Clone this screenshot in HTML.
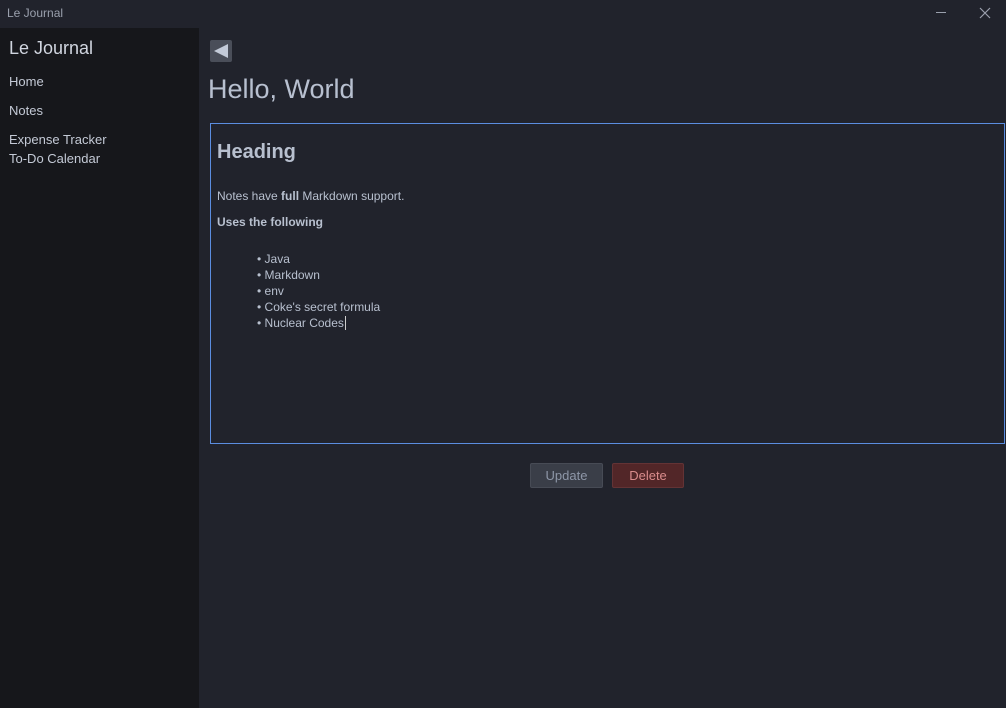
<!DOCTYPE html>
<html><head><style>
*{margin:0;padding:0;box-sizing:border-box}
body{width:1006px;height:708px;background:#21232c;font-family:"Liberation Sans",sans-serif;color:#b8c0cf;position:relative;overflow:hidden}
.tb{position:absolute;left:0;top:0;width:1006px;height:28px;background:#21232c}
.tb .t{position:absolute;left:7px;top:6px;font-size:12px;color:#9aa0ad}
.side{position:absolute;left:0;top:28px;width:199px;height:680px;background:#16171b}
.side div{position:absolute;left:9px;font-size:13px;color:#c4cad6}
.main div{position:absolute}
</style></head><body>
<div class="tb"><span class="t">Le Journal</span>
<div style="position:absolute;left:936px;top:12px;width:10px;height:1px;background:#9aa0ad"></div>
<svg style="position:absolute;left:979px;top:7px" width="12" height="12"><path d="M1 1L11 11M11 1L1 11" stroke="#9aa0ad" stroke-width="1.2"/></svg>
</div>
<div class="side">
<div style="top:10px;font-size:18px;color:#d0d5df">Le Journal</div>
<div style="top:46px">Home</div>
<div style="top:75px">Notes</div>
<div style="top:104px">Expense Tracker</div>
<div style="top:123px">To-Do Calendar</div>
</div>
<div class="main">
<div style="left:210px;top:40px;width:22px;height:22px;background:#4a4e59;border-radius:2px"></div>
<svg style="position:absolute;left:210px;top:40px" width="22" height="22"><path d="M4 11L18 4V18Z" fill="#c3cad8"/></svg>
<div style="left:208px;top:74px;font-size:27px;color:#b8c0d0">Hello, World</div>
<div style="left:210px;top:123px;width:795px;height:321px;border:1px solid #5b8de0"></div>
<div style="left:217px;top:141px;font-size:20px;font-weight:bold;color:#b8c0cf">Heading</div>
<div style="left:217px;top:189px;font-size:12px">Notes have <b>full</b> Markdown support.</div>
<div style="left:217px;top:215px;font-size:12px;font-weight:bold">Uses the following</div>
<div style="left:257px;top:251px;font-size:12px;line-height:16px">• Java<br>• Markdown<br>• env<br>• Coke's secret formula<br>• Nuclear Codes<span style="border-left:1px solid #ccc;margin-left:1px"></span></div>
<div style="left:530px;top:463px;width:73px;height:25px;background:#3a3e48;border:1px solid #474b55;border-radius:2px;font-size:13px;color:#8e97a8;text-align:center;line-height:23px">Update</div>
<div style="left:612px;top:463px;width:72px;height:25px;background:#522628;border:1px solid #633335;border-radius:2px;font-size:13px;color:#d98c8c;text-align:center;line-height:23px">Delete</div>
</div>
</body></html>
